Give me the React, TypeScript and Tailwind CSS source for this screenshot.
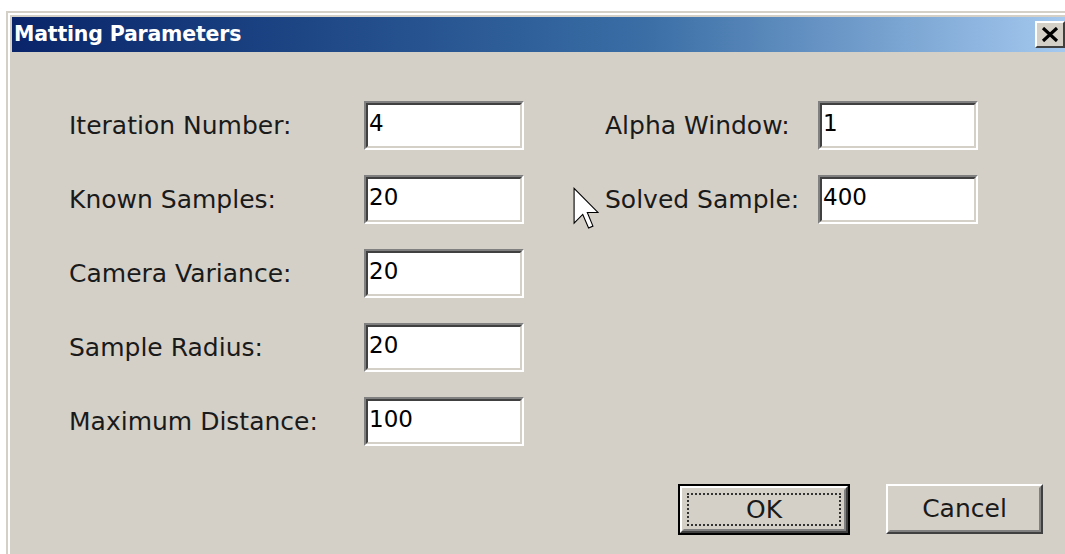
const fields = [
  { label: "Iteration Number:", value: "4" },
  { label: "Known Samples:", value: "20" },
  { label: "Camera Variance:", value: "20" },
  { label: "Sample Radius:", value: "20" },
  { label: "Maximum Distance:", value: "100" },
]

const extraFields = [
  { label: "Alpha Window:", value: "1" },
  { label: "Solved Sample:", value: "400" },
]

function SunkenInput({ value }: { value: string }) {
  return (
    <div className="w-[160px] h-[49px] border-2 border-t-[#808080] border-l-[#808080] border-b-white border-r-white">
      <div className="h-full border-2 border-t-[#404040] border-l-[#404040] border-b-[#d4d0c8] border-r-[#d4d0c8] bg-white pl-[1px] pt-[4px] text-[23px] leading-[28px] text-black">
        {value}
      </div>
    </div>
  )
}

function Row({ label, value, labelWidth }: { label: string; value: string; labelWidth: string }) {
  return (
    <div className="flex items-center h-[49px]">
      <div className={`${labelWidth} text-[25px] text-[#1a1a1a]`}>{label}</div>
      <SunkenInput value={value} />
    </div>
  )
}

function RaisedButton({ children, isDefault }: { children: string; isDefault?: boolean }) {
  const inner = (
    <div className="h-full border-2 border-t-white border-l-white border-b-[#404040] border-r-[#404040]">
      <div className="h-full border-2 border-t-[#d4d0c8] border-l-[#d4d0c8] border-b-[#808080] border-r-[#808080] flex items-center justify-center p-[3px]">
        <div
          className={`w-full h-full flex items-center justify-center text-[25px] text-[#1a1a1a] ${
            isDefault ? "border-2 border-dotted border-[#333]" : ""
          }`}
        >
          {children}
        </div>
      </div>
    </div>
  )
  if (isDefault) {
    return <div className="w-[172px] h-[51px] border-2 border-black">{inner}</div>
  }
  return <div className="w-[157px] h-[50px]">{inner}</div>
}

export default function App() {
  return (
    <div
      className="w-[1065px] h-[554px] overflow-hidden bg-white relative"
      style={{ fontFamily: '"DejaVu Sans", Tahoma, sans-serif' }}
    >
      {/* window frame */}
      <div className="ml-[6px] mt-[11px] w-[1065px] h-[560px] border-l-2 border-t-2 border-[#d4d0c8]">
        <div className="h-full border-l-2 border-t-2 border-white bg-[#d4d0c8] p-[2px]">
          {/* title bar */}
          <div className="h-[35px] flex items-center justify-between bg-linear-to-r from-[#0a246a] via-[#3a6ea5] via-60% to-[#a6caf0] pl-[2px] pr-[4px]">
            <span className="text-white font-bold text-[20.5px] tracking-[-0.2px]">Matting Parameters</span>
            <div className="w-[30px] h-[27px] border-2 border-t-white border-l-white border-b-[#404040] border-r-[#404040] bg-[#d4d0c8] flex items-center justify-center">
              <svg width="18" height="15" viewBox="0 0 18 15">
                <path d="M2 1 L16 14 M16 1 L2 14" stroke="#000" strokeWidth="3.2" />
              </svg>
            </div>
          </div>

          {/* fields */}
          <div className="flex pl-[57px] pt-[49px]">
            <div className="flex flex-col gap-[25px]">
              {fields.map((f) => (
                <Row key={f.label} label={f.label} value={f.value} labelWidth="w-[295px]" />
              ))}
            </div>
            <div className="ml-[81px] flex flex-col gap-[25px]">
              {extraFields.map((f) => (
                <Row key={f.label} label={f.label} value={f.value} labelWidth="w-[213px]" />
              ))}
            </div>
          </div>

          {/* buttons */}
          <div className="flex justify-end gap-[36px] pr-[26px] mt-[38px]">
            <RaisedButton isDefault>OK</RaisedButton>
            <RaisedButton>Cancel</RaisedButton>
          </div>
        </div>
      </div>

      {/* mouse pointer */}
      <svg className="absolute left-[573px] top-[187px]" width="26" height="44" viewBox="0 0 12 20">
        <path
          d="M0.5 0.5 L0.5 16.5 L4.5 12.5 L7.2 18.8 L9.2 17.9 L6.6 11.6 L11.5 11.6 Z"
          fill="#fff"
          stroke="#000"
          strokeWidth="0.5"
        />
      </svg>
    </div>
  )
}
